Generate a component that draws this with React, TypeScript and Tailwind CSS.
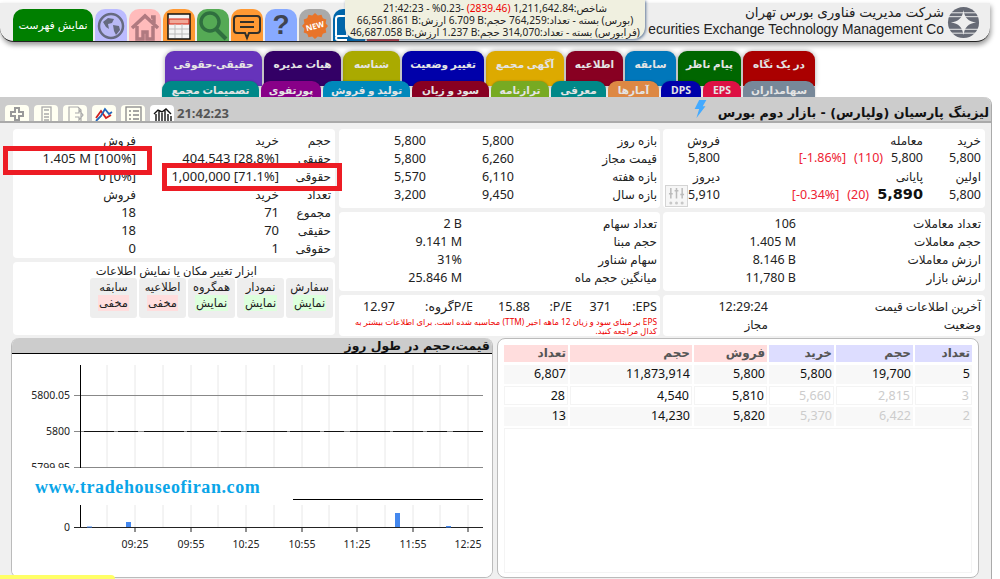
import React from "react";

const row1: [string, string, number][] = [
  ["در یک نگاه", "bg-[#aa0000]", 72],
  ["پیام ناظر", "bg-[#006600]", 63],
  ["سابقه", "bg-[#0077bb]", 51],
  ["اطلاعیه", "bg-[#880022]", 57],
  ["آگهی مجمع", "bg-[#ddaa00]", 78],
  ["تغییر وضعیت", "bg-[#0000aa]", 82],
  ["شناسه", "bg-[#aaaa00]", 57],
  ["هیات مدیره", "bg-[#330066]", 77],
  ["حقیقی-حقوقی", "bg-[#6633bb]", 97],
];
const row2: [string, string, number][] = [
  ["سهامداران", "bg-[#778899]", 72],
  ["EPS", "bg-[#dd1144]", 38],
  ["DPS", "bg-[#0000aa]", 40],
  ["آمارها", "bg-[#dd8844]", 51],
  ["معرفی", "bg-[#008888]", 55],
  ["ترازنامه", "bg-[#77aa22]", 58],
  ["سود و زیان", "bg-[#880022]", 77],
  ["تولید و فروش", "bg-[#0088bb]", 87],
  ["پورتفوی", "bg-[#880088]", 60],
  ["تصمیمات مجمع", "bg-[#008888]", 97],
];

function Tab({ t, c, w, low }: { t: string; c: string; w: number; low?: boolean }) {
  return (
    <div
      style={{ width: w }}
      className={`${c} ${low ? "h-[16px] pt-[2px] leading-[14px] shadow-[0_0_2px_rgba(0,0,0,0.3)]" : "h-[35px] pt-[5px] leading-[16px] shadow-[0_0_5px_rgba(0,0,0,0.35)]"} shrink-0 rounded-t-[9px] text-center text-[10.5px] font-bold text-[#e4e4e4] overflow-hidden whitespace-nowrap`}
    >
      {t}
    </div>
  );
}

function HeaderIcon({ bg, children }: { bg: string; children: React.ReactNode }) {
  return (
    <div className={`${bg} flex h-[32px] w-[32px] items-end justify-center rounded-t-[10px] shrink-0 overflow-hidden`}>{children}</div>
  );
}

function Panel({ className, children }: { className?: string; children: React.ReactNode }) {
  return <div className={`rounded-[4px] bg-white ${className ?? ""}`}>{children}</div>;
}

function KV({ a, b, w }: { a: string; b: string; w: number }) {
  return (
    <div className="flex h-[18px] items-center">
      <div style={{ width: w }} className="shrink-0 whitespace-nowrap">{a}</div>
      <div dir="rtl" className="whitespace-nowrap text-[12.5px]"><span dir="ltr">{b}</span></div>
    </div>
  );
}

function Toggle({ t, s, on }: { t: string; s: string; on: boolean }) {
  return (
    <div className="flex h-[40px] w-[47px] flex-col items-center rounded-[3px] bg-[#eeeeee] pt-[1px] text-[11.5px] leading-[16px]">
      <div>{t}</div>
      <div className={on ? "bg-[#ddffdd] px-[1px]" : "bg-[#ffdddd] px-[1px]"}>{s}</div>
    </div>
  );
}

const bookHead: [string, string, number][] = [
  ["تعداد", "bg-[#ddddff]", 57],
  ["حجم", "bg-[#ddddff]", 77],
  ["خرید", "bg-[#ddddff]", 65],
  ["فروش", "bg-[#ffdddd]", 73],
  ["حجم", "bg-[#ffdddd]", 122],
  ["تعداد", "bg-[#ffdddd]", 64],
];
const bookRows: [string, string, string, string, string, string, boolean][] = [
  ["5", "19,700", "5,800", "5,800", "11,873,914", "6,807", false],
  ["3", "2,815", "5,660", "5,810", "4,540", "28", true],
  ["2", "6,422", "5,370", "5,820", "14,230", "13", true],
];

function Chart() {
  const grid = [107, 135, 163, 191, 218, 246, 274, 302, 329, 357, 385, 413, 440, 468];
  const ticks: [number, string][] = [
    [135, "09:25"], [191, "09:55"], [246, "10:25"], [302, "10:55"], [357, "11:25"], [413, "11:55"], [468, "12:25"],
  ];
  return (
    <svg width="482" height="224" viewBox="11 354 482 224" className="block -ml-[1px]">
      <rect x="11" y="354" width="482" height="224" fill="#fff" />
      {grid.map((x) => (
        <React.Fragment key={x}>
          <line x1={x} x2={x} y1="365" y2="467" stroke="#e8e8e8" />
          <line x1={x} x2={x} y1="505" y2="527" stroke="#e8e8e8" />
        </React.Fragment>
      ))}
      <line x1="74" x2="483" y1="395.5" stroke="#888" y2="395.5" />
      <line x1="74" x2="483" y1="431.5" stroke="#888" y2="431.5" />
      <line x1="84" x2="483" y1="431.5" y2="431.5" stroke="#111" strokeDasharray="30 4 20 6 40 3" />
      <line x1="80.5" x2="80.5" y1="505" y2="528" stroke="#000" />
      <line x1="293" x2="483" y1="499.5" y2="499.5" stroke="#000" />
      <line x1="74" x2="483" y1="527.5" y2="527.5" stroke="#222" />
      <rect x="126" y="522" width="5" height="5" fill="#4488ee" />
      <rect x="395" y="513" width="5" height="14" fill="#4488ee" />
      <rect x="446" y="526" width="5" height="1.5" fill="#4488ee" />
      <rect x="87" y="526.5" width="5" height="1" fill="#4488ee" />
      {ticks.map(([x, t]) => (
        <React.Fragment key={t}>
          <line x1={x} x2={x} y1="528" y2="532" stroke="#222" />
          <text x={x} y="548" textAnchor="middle" fontSize="10.5" fill="#222">{t}</text>
        </React.Fragment>
      ))}
      <text x="70" y="399" textAnchor="end" fontSize="10.5" fill="#222">5800.05</text>
      <text x="70" y="435" textAnchor="end" fontSize="10.5" fill="#222">5800</text>
      <text x="70" y="471" textAnchor="end" fontSize="10.5" fill="#222">5799.95</text>
      <rect x="11" y="468" width="482" height="25" fill="#fff" />
      <line x1="74" x2="483" y1="467.5" y2="467.5" stroke="#888" />
      <line x1="80.5" x2="80.5" y1="365" y2="468" stroke="#000" />
      <text x="70" y="531" textAnchor="end" fontSize="10.5" fill="#222">0</text>
    </svg>
  );
}

const star = Array.from({ length: 24 }, (_, i) => {
  const r = i % 2 === 0 ? 13 : 11;
  const a = (i / 24) * Math.PI * 2;
  return `${(14 + r * Math.cos(a)).toFixed(1)},${(14 + r * Math.sin(a)).toFixed(1)}`;
}).join(" ");

const tools: React.ReactNode[] = [
  <path key="a" d="M7 3h4v4h4v4h-4v4H7v-4H3V7h4z" fill="none" stroke="#999" strokeWidth="2" />,
  <g key="b" fill="none" stroke="#aaa" strokeWidth="1.3"><rect x="5" y="2" width="9" height="16" /><path d="M7 5h5M7 9h5M7 12h5M7 15h5" /></g>,
  <path key="c" d="M3 2h9l3 3v13H3zM9 8h4V5l4 5-4 5v-3H9" fill="none" stroke="#aaa" strokeWidth="1.2" />,
  <g key="d" fill="none" strokeWidth="1.8"><path d="M1 13l5-7 5 7 5-3" stroke="#d02020" /><path d="M1 16l5-5 4-7 4 5 3-2" stroke="#2266bb" /></g>,
  <g key="e" fill="none" stroke="#888" strokeWidth="1.3"><rect x="2" y="2" width="15" height="16" /><path d="M5 6h2M9 6h6M5 10h2M9 10h6M5 14h2M9 14h6" /></g>,
];

export default function App() {
  return (
    <div className="relative h-[579px] w-[1000px] overflow-hidden bg-white font-['Noto_Sans','DejaVu_Sans',sans-serif] text-[12px] text-[#222]">
      {/* Header */}
      <div className="mt-[3px] flex h-[39px] w-[990px] items-end justify-between rounded-b-[14px] border-b border-[#222] bg-[#eeeeee] pl-[13px] shadow-[1px_3px_5px_rgba(0,0,0,0.4)]">
        <div className="flex items-end gap-[2px]">
          <div className="flex h-[32px] w-[80px] items-center justify-center rounded-t-[10px] bg-[#007f00] text-[11px] text-white">نمایش فهرست</div>
          <HeaderIcon bg="bg-[#bbbbff]">
            <svg width="30" height="30" viewBox="0 0 30 30">
              <circle cx="15" cy="15" r="12" fill="#b9b9f5" stroke="#666a80" strokeWidth="2.5" />
              <path d="M7 11l5-4 6 1-2 4-4 1 1 5-3-2zM17 14l6 1 1 4-4 5-2-4z" fill="#666a80" />
            </svg>
          </HeaderIcon>
          <HeaderIcon bg="bg-[#ffbbbb]">
            <svg width="30" height="28" viewBox="0 0 30 28">
              <path d="M2 15L15 3l13 12M7 13v13h6v-7h4v7h6V13M21 4h3v6" fill="none" stroke="#b07a80" strokeWidth="3.5" />
            </svg>
          </HeaderIcon>
          <HeaderIcon bg="bg-[#ff9933]">
            <svg width="24" height="28" viewBox="0 0 24 28">
              <rect x="1" y="1" width="22" height="25" fill="#f4f4f4" stroke="#111" strokeWidth="1.5" />
              <rect x="2" y="6" width="20" height="5" fill="#f0a898" stroke="#d62010" />
              <path d="M8 11v14M15 11v14M2 16h20M2 21h20" stroke="#bbb" fill="none" />
            </svg>
          </HeaderIcon>
          <HeaderIcon bg="bg-[#55aa55]">
            <svg width="32" height="31" viewBox="0 0 32 31">
              <circle cx="13" cy="12" r="9" fill="none" stroke="#2f6f3f" strokeWidth="3.5" />
              <path d="M19 19l10 10" stroke="#2f6f3f" strokeWidth="4" />
            </svg>
          </HeaderIcon>
          <HeaderIcon bg="bg-[#ff9933]">
            <svg width="30" height="28" viewBox="0 0 30 28">
              <path d="M5 3h20a3 3 0 0 1 3 3v11a3 3 0 0 1-3 3h-8l-2 5-2-5H5a3 3 0 0 1-3-3V6a3 3 0 0 1 3-3z" fill="none" stroke="#33302a" strokeWidth="2" />
              <path d="M8 9h14M8 14h14" stroke="#33302a" strokeWidth="2" />
            </svg>
          </HeaderIcon>
          <div className="flex h-[32px] w-[32px] shrink-0 items-center justify-center rounded-t-[10px] bg-[#88aaff] font-['Liberation_Sans',sans-serif] text-[28px] font-bold leading-[32px] text-[#3f4450]">?</div>
          <HeaderIcon bg="bg-[#aaaaaa]">
            <svg width="28" height="28" viewBox="0 0 28 28" className="mb-[1px]">
              <polygon points={star} fill="#e8742a" />
              <text x="14" y="17" textAnchor="middle" fontSize="8" fontWeight="700" fill="#fff" transform="rotate(-15 14 14)">NEW</text>
            </svg>
          </HeaderIcon>
          <HeaderIcon bg="bg-[#0066aa]">
            <svg width="32" height="28" viewBox="0 0 32 28">
              <path d="M3 23V6a3 3 0 0 1 3-3h8v20H5a2 2 0 0 0 0 4h9" fill="none" stroke="#fff" strokeWidth="2" />
            </svg>
          </HeaderIcon>
          <HeaderIcon bg="bg-[#cc3333]"><span /></HeaderIcon>
        </div>
        <div dir="rtl" className="flex h-[38px] items-center gap-[3px] pr-[10px] font-['Liberation_Sans','DejaVu_Sans',sans-serif]">
          <svg width="33" height="33" viewBox="0 0 34 34" className="shrink-0">
            <circle cx="17" cy="17" r="16" fill="#666a75" />
            <path d="M17 4c1 8 5 12 13 13-8 1-12 5-13 13-1-8-5-12-13-13 8-1 12-5 13-13z" fill="#eee" />
            <path d="M1 7h32M1 11h32M1 24h32M1 28h32" stroke="#eee" strokeWidth="1" />
          </svg>
          <div className="-mt-[3px] whitespace-nowrap text-[13.5px] leading-[17px] text-[#222]">
            <div>شرکت مدیریت فناوری بورس تهران</div>
            <div dir="ltr" className="flex justify-end text-[13.8px]">ecurities Exchange Technology Management Co</div>
          </div>
        </div>
      </div>

      {/* Market tooltip */}
      <div dir="rtl" className="absolute left-[345px] top-0 z-20 flex h-[39px] w-[300px] flex-col items-center justify-center rounded-b-[12px] bg-[#f0f0e0] text-[10.2px] leading-[12px] text-[#222] shadow-[1px_1px_3px_rgba(60,90,130,0.8)] whitespace-nowrap">
        <div>شاخص:1,211,642.84 <span className="text-[#ee0000]">(2839.46)</span> -0.23% - 21:42:23</div>
        <div>(بورس) بسته - تعداد:764,259 حجم:<span dir="ltr">6.709 B</span> ارزش:<span dir="ltr">66,561.861 B</span></div>
        <div>(فرابورس) بسته - تعداد:314,070 حجم:<span dir="ltr">1.237 B</span> ارزش:<span dir="ltr">46,687.058 B</span></div>
      </div>

      {/* Tabs */}
      <div dir="rtl" className="mt-[9px] flex w-[815px] gap-[2px]">
        {row1.map(([t, c, w]) => <Tab key={t} t={t} c={c} w={w} />)}
      </div>
      <div dir="rtl" className="relative -mt-[5px] flex w-[815px] gap-[2px]">
        {row2.map(([t, c, w]) => <Tab key={t} t={t} c={c} w={w} low />)}
      </div>

      {/* Content */}
      <div className="relative h-[482px] w-[992px] rounded-tr-[8px] border-r border-[#aaaaaa] bg-[#f0f0f0]">
        <div className="flex h-[26px] items-end justify-between rounded-tr-[8px] border-b-2 border-[#aaaaaa] bg-[#cccccc] pl-[5px] pr-[2px]">
          <div className="flex items-end">
            <div className="flex items-end gap-[5px]">
              {tools.map((node, i) => (
                <div key={i} className="flex h-[16px] w-[24px] items-start justify-center overflow-hidden rounded-t-[4px] bg-[#fffff2]">
                  <svg width="18" height="18" viewBox="0 0 18 18" className="shrink-0">{node}</svg>
                </div>
              ))}
              <div className="flex h-[16px] w-[24px] items-end justify-center rounded-t-[4px] bg-white">
                <svg width="19" height="14" viewBox="0 0 19 14">
                  <path d="M3 14V7M6 14V4M9 14V6M12 14V3M15 14V7M18 14V9M1 7l4-4 4 2 4-3 5 5" fill="none" stroke="#111" strokeWidth="1.4" />
                </svg>
              </div>
            </div>
            <span className="ml-[3px] text-[13px] font-bold leading-[16px] text-[#555555]">21:42:23</span>
          </div>
          <div dir="rtl" className="flex items-end gap-[11px] font-['DejaVu_Sans',sans-serif] text-[12.7px] font-bold leading-[16px] text-[#111]">
            <span>لیزینگ پارسیان (ولپارس) - بازار دوم بورس</span>
            <svg width="13" height="18" viewBox="0 0 13 20" className="mb-[3px]"><path d="M5 0h8L9 7h3L2 20l3-10H0z" fill="#44aaff" /></svg>
          </div>
        </div>

        <div className="flex">
          {/* Column 1 */}
          <div className="ml-[13px] w-[322px] pt-[6px]">
            <Panel className="h-[129px]">
              <div className="pt-[3px]">
                {[
                  ["حجم", "خرید", "فروش"],
                  ["حقیقی", "404,543 [28.8%]", "1.405 M [100%]"],
                  ["حقوقی", "1,000,000 [71.1%]", "0 [0%]"],
                  ["تعداد", "خرید", "فروش"],
                  ["مجموع", "71", "18"],
                  ["حقیقی", "70", "18"],
                  ["حقوقی", "1", "0"],
                ].map((r, i) => {
                  const head = i === 0 || i === 3;
                  return (
                    <div dir="rtl" key={i} className="flex h-[18px] items-center pr-[4px] whitespace-nowrap">
                      <div className="w-[52px] shrink-0">{r[0]}</div>
                      <div dir={head ? "rtl" : "ltr"} className={`w-[143px] shrink-0 text-right ${head ? "" : "text-[13px]"}`}>{r[1]}</div>
                      <div dir={head ? "rtl" : "ltr"} className={`w-[100px] shrink-0 text-right ${head ? "" : "text-[13px]"}`}>{r[2]}</div>
                    </div>
                  );
                })}
              </div>
            </Panel>
            <Panel className="mt-[4px] h-[73px]">
              <div className="flex flex-col items-end pr-[2px]">
                <div dir="rtl" className="mr-[76px] h-[16px] whitespace-nowrap pt-[1px] text-[11.5px] leading-[15px]">ابزار تغییر مکان یا نمایش اطلاعات</div>
                <div dir="rtl" className="flex gap-[2px]">
                  <Toggle t="سفارش" s="نمایش" on />
                  <Toggle t="نمودار" s="نمایش" on />
                  <Toggle t="همگروه" s="نمایش" on />
                  <Toggle t="اطلاعیه" s="مخفی" on={false} />
                  <Toggle t="سابقه" s="مخفی" on={false} />
                </div>
              </div>
            </Panel>
          </div>

          {/* Column 2 */}
          <div className="ml-[4px] w-[321px] pt-[6px]">
            <Panel className="h-[79px] pt-[3px]">
              {[
                ["بازه روز", "5,800", "5,800"],
                ["قیمت مجاز", "6,260", "5,800"],
                ["بازه هفته", "6,110", "5,570"],
                ["بازه سال", "9,450", "3,200"],
              ].map((r) => (
                <div dir="rtl" key={r[0]} className="flex h-[18px] items-center pr-[3px] whitespace-nowrap">
                  <div className="w-[143px] shrink-0">{r[0]}</div>
                  <div className="w-[88px] shrink-0 text-[12.5px]">{r[1]}</div>
                  <div className="text-[12.5px]">{r[2]}</div>
                </div>
              ))}
            </Panel>
            <Panel className="mt-[4px] h-[79px] pt-[3px]">
              <div dir="rtl" className="pr-[3px]">
                <KV a="تعداد سهام" b="2 B" w={195} />
                <KV a="حجم مبنا" b="9.141 M" w={195} />
                <KV a="سهام شناور" b="31%" w={195} />
                <KV a="میانگین حجم ماه" b="25.846 M" w={195} />
              </div>
            </Panel>
            <Panel className="mt-[4px] h-[41px] pt-[3px]">
              <div dir="rtl" className="flex h-[18px] items-center pr-[3px] whitespace-nowrap text-[12.5px]">
                <span className="w-[46px]">EPS:</span>
                <span className="w-[39px]">371</span>
                <span className="w-[42px]">P/E:</span>
                <span className="w-[57px]">15.88</span>
                <span className="w-[78px]">P/Eگروه:</span>
                <span>12.97</span>
              </div>
              <div dir="rtl" className="mt-[1px] whitespace-nowrap pr-[3px] text-[8.3px] leading-[9px] text-[#ee0000]">
                EPS بر مبنای سود و زیان 12 ماهه اخیر (TTM) محاسبه شده است. برای اطلاعات بیشتر به<br />کدال مراجعه کنید.
              </div>
            </Panel>
          </div>

          {/* Column 3 */}
          <div className="ml-[3px] w-[322px] pt-[6px]">
            <Panel className="relative h-[79px] pt-[3px]">
              <div dir="rtl" className="pr-[4px] whitespace-nowrap">
                <div className="flex h-[18px] items-center"><span className="w-[58px]">خرید</span><span className="w-[203px]">معامله</span><span>فروش</span></div>
                <div className="flex h-[17px] items-center text-[12.5px]">
                  <span className="w-[58px]">5,800</span>
                  <div className="flex w-[203px] gap-[8px]">
                    <span>5,800</span>
                    <span dir="ltr" className="text-[#ee2233]">(110)</span>
                    <span dir="ltr" className="text-[#ee2233]">[-1.86%]</span>
                  </div>
                  <span>5,800</span>
                </div>
                <div className="flex h-[19px] items-center"><span className="w-[58px]">اولین</span><span className="w-[203px]">پایانی</span><span>دیروز</span></div>
                <div className="flex h-[18px] items-center text-[12.5px]">
                  <span className="w-[58px]">5,800</span>
                  <div className="flex w-[203px] items-center gap-[8px]">
                    <span className="font-['DejaVu_Sans',sans-serif] text-[14.5px] font-bold text-[#111]">5,890</span>
                    <span dir="ltr" className="text-[#ee2233]">(20)</span>
                    <span dir="ltr" className="text-[#ee2233]">[-0.34%]</span>
                  </div>
                  <span>5,910</span>
                </div>
              </div>
              <div className="absolute left-[2px] top-[56px] flex h-[22px] w-[23px] items-center justify-center border border-[#d4d4d4] bg-[#f6f6f6]">
                <svg width="17" height="19" viewBox="0 0 18 20">
                  <path d="M3 1v11M9 1v11M15 1v11M1 7h4M7 4h4M13 8h4" fill="none" stroke="#bbbbbb" strokeWidth="1.6" />
                  <circle cx="3" cy="17" r="1.6" fill="#c8c8c8" /><circle cx="9" cy="17" r="1.6" fill="#c8c8c8" /><circle cx="15" cy="17" r="1.6" fill="#c8c8c8" />
                </svg>
              </div>
            </Panel>
            <Panel className="mt-[4px] h-[79px] pt-[3px]">
              <div dir="rtl" className="pr-[4px]">
                <KV a="تعداد معاملات" b="106" w={185} />
                <KV a="حجم معاملات" b="1.405 M" w={185} />
                <KV a="ارزش معاملات" b="8.146 B" w={185} />
                <KV a="ارزش بازار" b="11,780 B" w={185} />
              </div>
            </Panel>
            <Panel className="mt-[4px] h-[41px] pt-[3px]">
              <div dir="rtl" className="pr-[4px]">
                <KV a="آخرین اطلاعات قیمت" b="12:29:24" w={213} />
                <div className="flex h-[18px] items-center whitespace-nowrap">
                  <div className="w-[213px] shrink-0">وضعیت</div>
                  <div>مجاز</div>
                </div>
              </div>
            </Panel>
          </div>
        </div>

        {/* Lower section */}
        <div className="ml-[11px] mt-[2px] flex gap-[4px]">
          <div className="h-[240px] w-[482px] overflow-hidden rounded-[8px] border-x border-b border-[#bbbbbb] bg-white">
            <div dir="rtl" className="h-[16px] border-b border-black bg-[#cccccc] pr-[2px] font-['DejaVu_Sans',sans-serif] text-[12.4px] font-bold leading-[15px] text-[#111]">قیمت،حجم در طول روز</div>
            <Chart />
          </div>
          <div className="h-[240px] w-[482px] rounded-[8px] border border-[#bbbbbb] bg-white px-[6px] pt-[6px]">
            <div dir="rtl" className="flex gap-[2px]">
              {bookHead.map(([t, c, w], i) => (
                <div key={i} style={{ width: w }} className={`${c} h-[17px] shrink-0 pr-[2px] font-['DejaVu_Sans',sans-serif] text-[12px] font-bold leading-[17px] text-[#555555]`}>{t}</div>
              ))}
            </div>
            {bookRows.map((r, ri) => (
              <div dir="rtl" key={ri} className={`flex gap-[2px] ${ri === 0 ? "mt-[3px]" : "mt-[2px]"}`}>
                {r.slice(0, 6).map((v, i) => (
                  <div
                    key={i}
                    style={{ width: bookHead[i][2] }}
                    className={`h-[19px] shrink-0 pr-[2px] text-[12.5px] leading-[18px] ${ri % 2 === 0 ? "bg-[#f8f8f8]" : "border border-[#f4f4f4] bg-white"} ${r[6] && i < 3 ? "text-[#cccccc]" : "text-[#111]"}`}
                  >
                    {String(v)}
                  </div>
                ))}
              </div>
            ))}
            <div className="mt-[2px] h-[145px] border border-[#f4f4f4]" />
          </div>
        </div>
      </div>

      {/* Red annotation boxes */}
      <div className="absolute left-[3px] top-[146px] z-10 h-[29px] w-[149px] border-[5px] border-[#ed1c24]" />
      <div className="absolute left-[162px] top-[163px] z-10 h-[28px] w-[180px] border-[5px] border-[#ed1c24]" />

      {/* Site mark */}
      <div className="absolute left-[35px] top-[477px] z-10 font-['Liberation_Serif',serif] text-[18px] font-bold leading-[20px] tracking-[0.6px] text-[#0aa5e8]">www.tradehouseofiran.com</div>

      {/* Yellow corner */}
      <div className="absolute bottom-0 left-0 z-10 h-[4px] w-[115px] rounded-tr-[6px] bg-[#ffff66]" />
    </div>
  );
}
